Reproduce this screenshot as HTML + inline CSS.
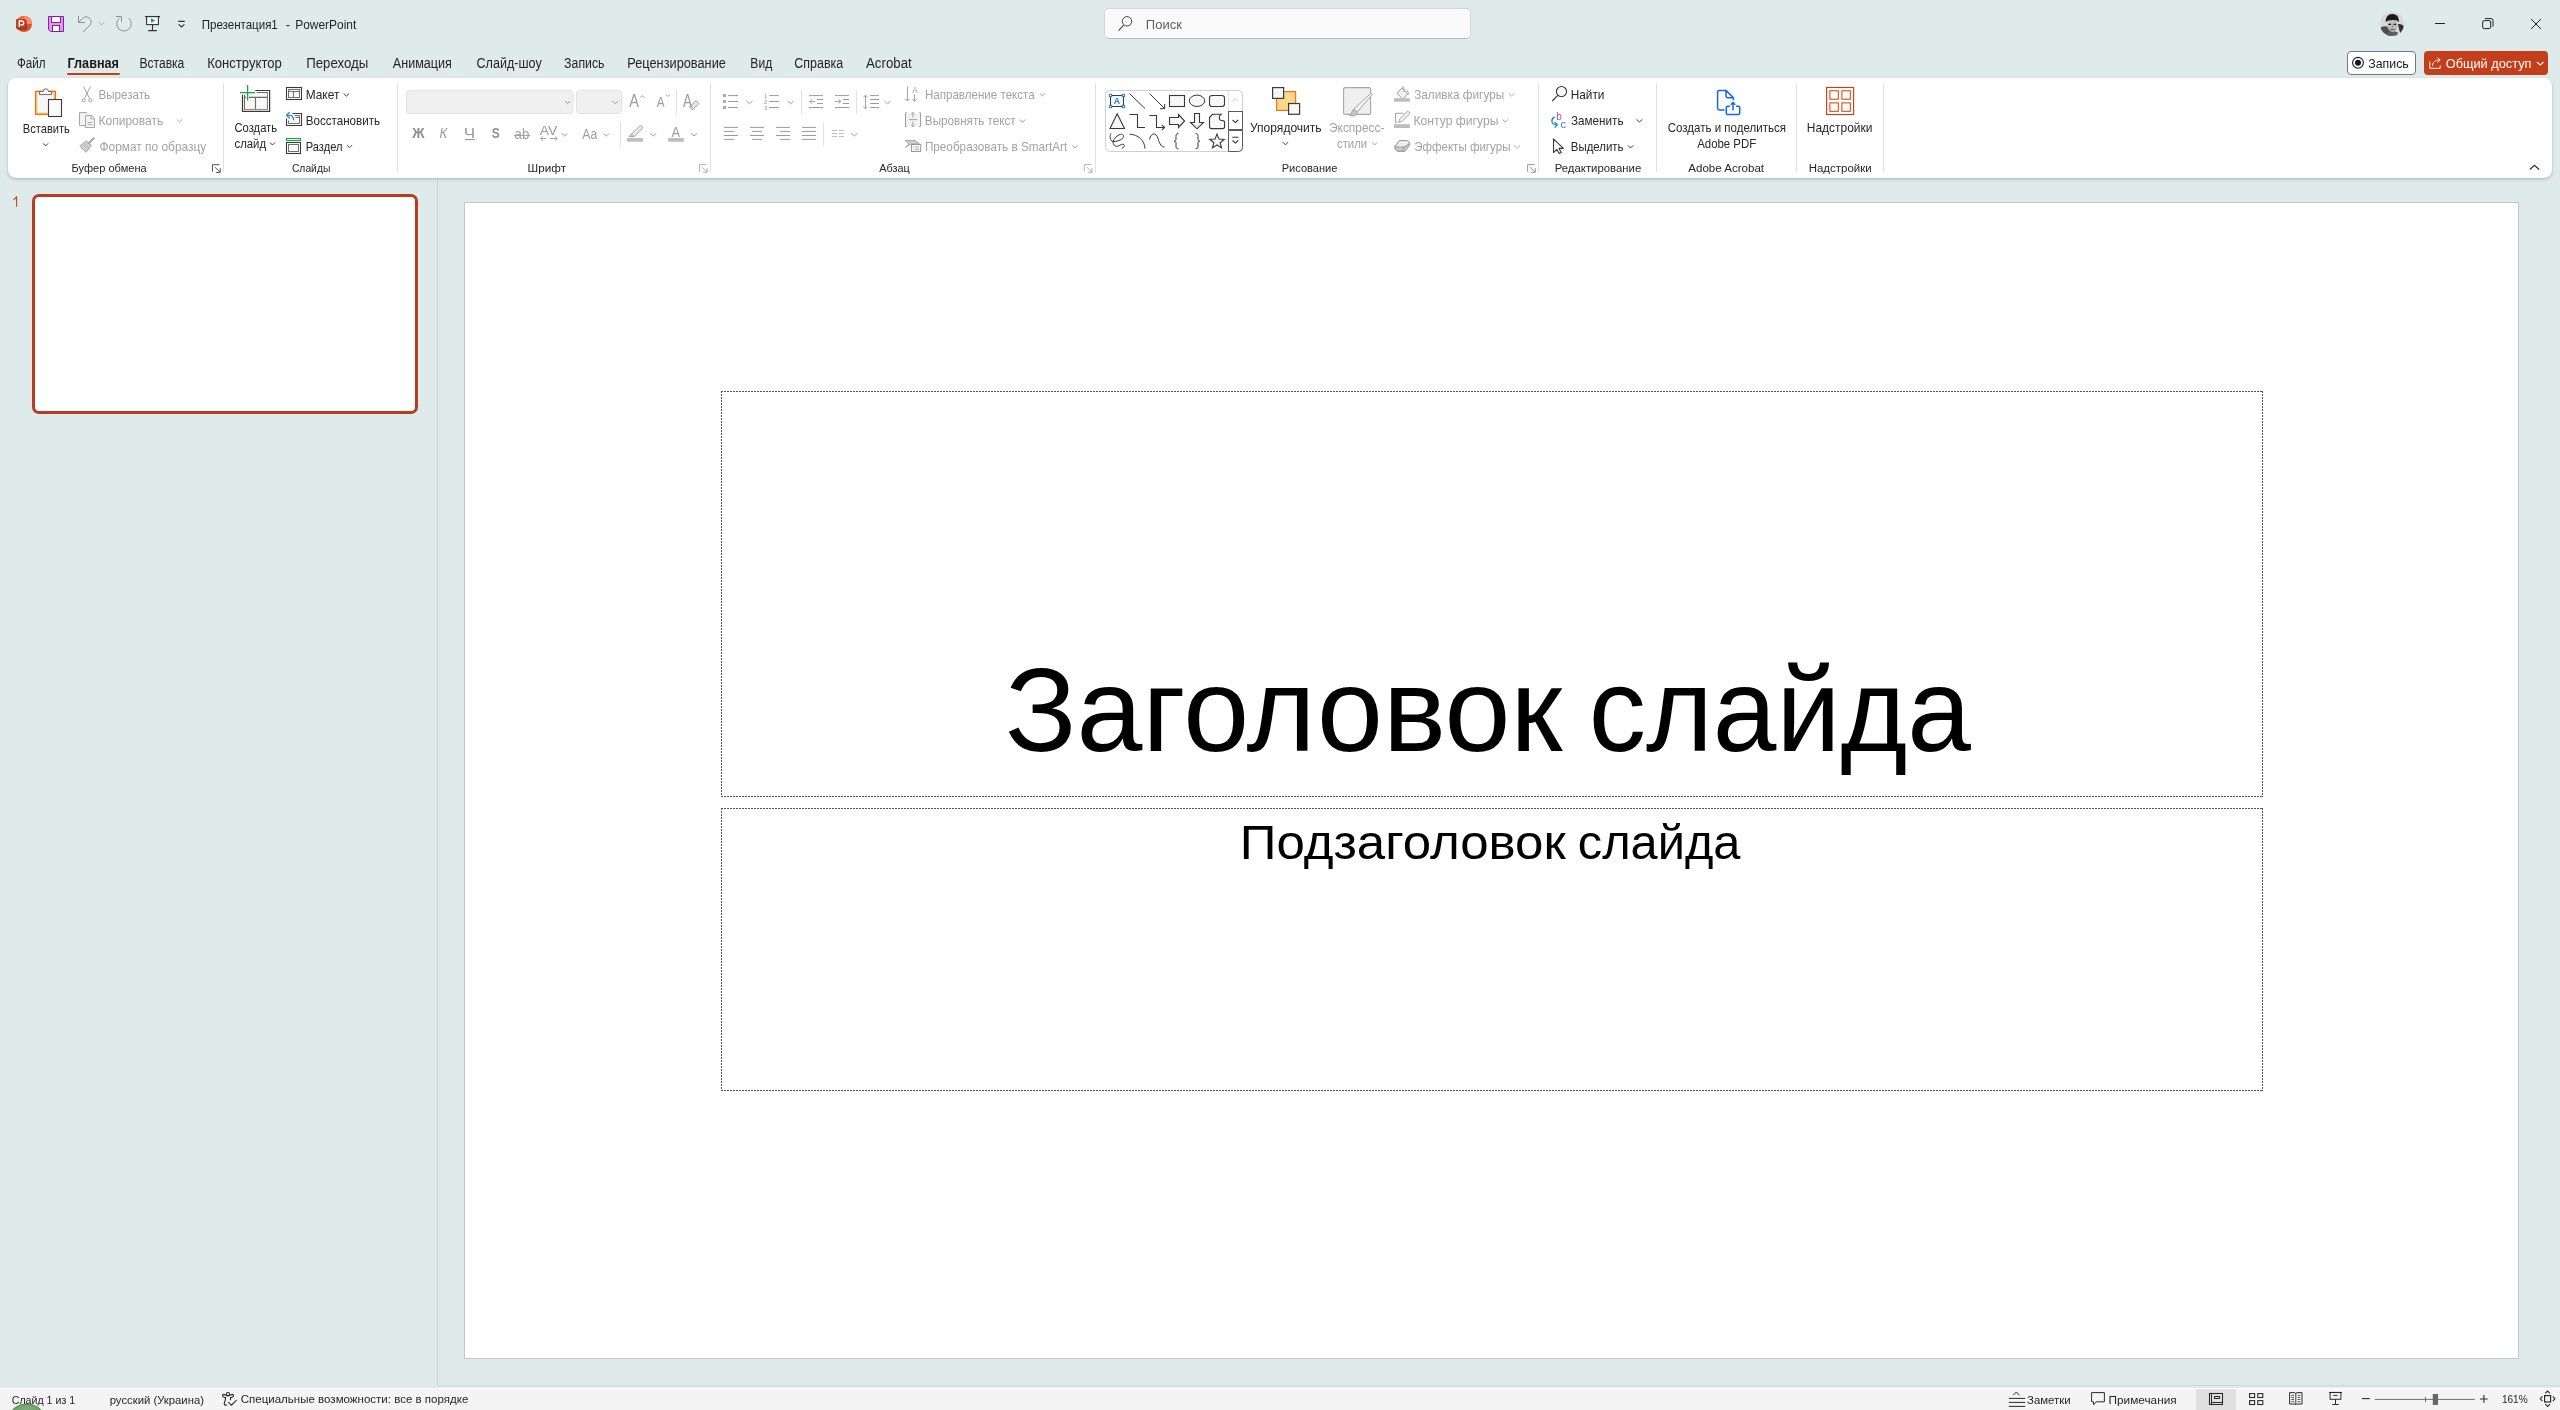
<!DOCTYPE html>
<html><head><meta charset="utf-8"><title>PowerPoint</title>
<style>
html,body{margin:0;padding:0;}
body{width:2560px;height:1410px;overflow:hidden;position:relative;background:#dfebea;font-family:"Liberation Sans",sans-serif;}
.abs{position:absolute;}
#ribbon{left:8px;top:78px;width:2544px;height:100px;background:#fff;border-radius:8px;box-shadow:0 1px 2px rgba(0,0,0,0.18),0 2px 5px rgba(0,0,0,0.08);}
#search{left:1104px;top:8px;width:365px;height:29px;background:#fafafa;border:1px solid #d6d6d6;border-bottom-color:#bdbdbd;border-radius:5px;}
#sep{left:437px;top:180px;width:1px;height:1206px;background:#d0d0d0;}
#slide{left:464px;top:202px;width:2053px;height:1155px;background:#fff;border:1px solid #c6c6c6;}
#bline{left:438px;top:1385px;width:2122px;height:1px;background:#d4d4d4;}
#status{left:0;top:1388px;width:2560px;height:22px;background:#f4f4f4;border-top:1px solid #ffffff;}
#thumb{left:32px;top:194px;width:380px;height:214px;background:#fff;border:3px solid #b83c1d;border-radius:7px;}
#share{left:2424px;top:51px;width:124px;height:24px;background:#c43e1c;border-radius:4px;}
#rec{left:2347px;top:51px;width:67px;height:22px;background:#fff;border:1px solid #767676;border-radius:4px;}
#tabul{left:67px;top:73px;width:53px;height:2px;background:#c43e1c;border-radius:1px;}
#normv{left:2196px;top:1389px;width:40px;height:21px;background:#e0e0e0;}
svg{position:absolute;left:0;top:0;will-change:transform;}
</style></head><body>
<div class="abs" id="ribbon"></div>
<div class="abs" id="search"></div>
<div class="abs" id="sep"></div>
<div class="abs" id="slide"></div>
<div class="abs" id="bline"></div>
<div class="abs" id="status"></div>
<div class="abs" id="normv"></div>
<div class="abs" id="thumb"></div>
<div class="abs" id="share"></div>
<div class="abs" id="rec"></div>
<div class="abs" id="tabul"></div>
<svg width="2560" height="1410" viewBox="0 0 2560 1410" font-family="'Liberation Sans', sans-serif">
<path d="M721,391.5 H2263 M721,796.5 H2263 M721.5,391 V797 M2262.5,391 V797" fill="none" stroke="#555" stroke-width="1" stroke-dasharray="2 1"/>
<path d="M721,808.5 H2263 M721,1090.5 H2263 M721.5,808 V1091 M2262.5,808 V1091" fill="none" stroke="#555" stroke-width="1" stroke-dasharray="2 1"/>
<circle cx="24" cy="24" r="8" fill="#d9522c"/>
<path d="M24,16 A8,8 0 0 1 32,24 L24,24 Z" fill="#ff8b66"/>
<path d="M24,16 A8,8 0 0 0 16.5,21 L24,24 Z" fill="#ed6c47"/>
<rect x="17" y="20" width="9.5" height="9.5" rx="1" fill="#6e2a19"/>
<rect x="16" y="19" width="9.8" height="9.8" rx="1" fill="#c43e1c"/>
<path d="M19.3,27 V21 H21.8 A1.9,1.9 0 0 1 21.8,24.8 H20.5" fill="none" stroke="#fff" stroke-width="1.4"/>
<path d="M48.5,16.5 H63.5 V31.5 H50.5 L48.5,29.5 Z" fill="#dc9ce5" stroke="#8f1c9f" stroke-width="1"/>
<rect x="51.5" y="16.5" width="9" height="6" fill="#fff" stroke="#8f1c9f" stroke-width="1"/>
<rect x="52.5" y="25.5" width="7" height="6" fill="#fff" stroke="#8f1c9f" stroke-width="1"/>
<path d="M78.5,16 V22.5 H85" fill="none" stroke="#8e8e8e" stroke-width="1"/>
<path d="M78.8,22.2 L82.8,18.2 A5,5 0 0 1 89.8,25.3 L83,32" fill="none" stroke="#8e8e8e" stroke-width="1"/>
<path d="M98.8,22.3 L101.5,24.8 L104.2,22.3" fill="none" stroke="#b3acac" stroke-width="1"/>
<path d="M128.9,18.3 A7.3,7.3 0 1 1 119.2,18.2" fill="none" stroke="#8e8e8e" stroke-width="1"/>
<path d="M116,16.5 H121.5 V22" fill="none" stroke="#8e8e8e" stroke-width="1"/>
<path d="M145,16.6 H160" stroke="#333333" stroke-width="1.3"/>
<rect x="146.6" y="16.6" width="11.8" height="8" fill="#fafafa" stroke="#333333" stroke-width="1.1"/>
<path d="M152.5,24.6 V30.5 M148.2,30.6 H156.9" stroke="#333333" stroke-width="1.1" fill="none"/>
<path d="M151,18.3 L155.2,20.5 L151,22.8 Z" fill="#1f9b45"/>
<path d="M178.2,21.4 H184.8 M178.6,24.3 L181.5,27 L184.4,24.3" fill="none" stroke="#333333" stroke-width="1.1"/>
<circle cx="1127" cy="21.3" r="4.7" fill="none" stroke="#444" stroke-width="1"/>
<path d="M1118.6,30.6 L1123.6,25.2" stroke="#444" stroke-width="1.1"/>
<clipPath id="av"><circle cx="2392" cy="24" r="12"/></clipPath>
<g clip-path="url(#av)"><rect x="2380" y="12" width="24" height="25" fill="#d9d9d9"/><path d="M2380,28 C2383.5,25.5 2387,25.8 2389.5,28.5 L2392.5,37 H2380 Z" fill="#4e4e4e"/><path d="M2398,24 C2401,23.5 2403.5,25 2404.5,27.5 L2400.5,34 L2399,29 Z" fill="#333333"/><path d="M2387,32.5 L2392.5,30.5 L2398,32.5 L2397,37 H2388 Z" fill="#5e5e5e"/><ellipse cx="2392.6" cy="25.8" rx="5.2" ry="6.1" fill="#bcbcbc"/><path d="M2385.8,22 C2385.3,16.5 2388.8,13.8 2392.5,14 C2396.5,14.1 2399.3,16.6 2398.9,22.5 C2397.6,20.3 2395.2,19.8 2392.6,20 C2390,20.1 2387.6,20.5 2385.8,22 Z" fill="#1b1b1b"/><path d="M2388.4,24.4 H2391 M2393.6,24.4 H2396.2" stroke="#222" stroke-width="1.1"/><path d="M2392.4,24.8 V28.2" stroke="#8c8c8c" stroke-width="0.9"/><path d="M2390.2,29.6 H2395" stroke="#555" stroke-width="1"/></g>
<path d="M2435,23.5 H2445" stroke="#1f1f1f" stroke-width="1"/>
<rect x="2482.7" y="20.6" width="8" height="8" rx="1.5" fill="none" stroke="#1f1f1f" stroke-width="1"/>
<path d="M2485,18.6 H2491 A2,2 0 0 1 2493,20.6 V26.6" fill="none" stroke="#1f1f1f" stroke-width="1"/>
<path d="M2531,19 L2541,29 M2541,19 L2531,29" stroke="#1f1f1f" stroke-width="1"/>
<circle cx="2358" cy="62.8" r="5.4" fill="none" stroke="#1a1a1a" stroke-width="1.1"/>
<circle cx="2358" cy="62.8" r="3" fill="#1a1a1a"/>
<path d="M2429.8,61.5 V68.3 H2440.2 V65.5" fill="none" stroke="#fff" stroke-width="1"/>
<path d="M2432.5,66 C2432.8,62 2435,60 2439.5,60" fill="none" stroke="#fff" stroke-width="1"/>
<path d="M2437.5,57.5 L2440.2,60 L2437.5,62.5" fill="none" stroke="#fff" stroke-width="1"/>
<path d="M2537,62 L2540.2,65 L2543.5,62" fill="none" stroke="#fff" stroke-width="1.1"/>
<path d="M2529.8,169.5 L2534.5,165.2 L2539.2,169.5" fill="none" stroke="#333333" stroke-width="1.2"/>
<path d="M223.5,83 V172" stroke="#e0e0e0" stroke-width="1"/>
<path d="M397.5,83 V172" stroke="#e0e0e0" stroke-width="1"/>
<path d="M710.5,83 V172" stroke="#e0e0e0" stroke-width="1"/>
<path d="M1095.5,83 V172" stroke="#e0e0e0" stroke-width="1"/>
<path d="M1538.5,83 V172" stroke="#e0e0e0" stroke-width="1"/>
<path d="M1656.5,83 V172" stroke="#e0e0e0" stroke-width="1"/>
<path d="M1796.5,83 V172" stroke="#e0e0e0" stroke-width="1"/>
<path d="M1883.5,83 V172" stroke="#e0e0e0" stroke-width="1"/>
<rect x="35.6" y="91.3" width="19.8" height="23" fill="#fbd98a" stroke="#e8730f" stroke-width="1.3"/>
<rect x="37.6" y="93.4" width="15.8" height="19" fill="#f7f7f7"/>
<path d="M39.6,94.6 V91.4 H43.2 A2.6,2.6 0 0 1 48.4,91.4 H51.6 V94.6 Z" fill="#fafafa" stroke="#6a6a6a" stroke-width="1"/>
<rect x="48.5" y="99.5" width="13" height="17" fill="#fafafa" stroke="#3b3b3b" stroke-width="1.1"/>
<path d="M43.0,143.3 L45.6,145.9 L48.2,143.3" fill="none" stroke="#3b3b3b" stroke-width="1.0"/>
<path d="M83.5,86.5 L89.6,98.6 M90.5,86.5 L84.4,98.6" fill="none" stroke="#a6a6a6" stroke-width="1"/>
<circle cx="83.8" cy="100.3" r="1.6" fill="none" stroke="#a6a6a6" stroke-width="1"/>
<circle cx="90.2" cy="100.3" r="1.6" fill="none" stroke="#a6a6a6" stroke-width="1"/>
<path d="M86.3,125.6 H79.5 V112.6 H86.5 L87.3,113.4" fill="#f4f4f4" stroke="#a6a6a6" stroke-width="1"/>
<path d="M85.5,115.5 H91.3 L94.5,118.7 V127.5 H85.5 Z" fill="#f4f4f4" stroke="#a6a6a6" stroke-width="1"/>
<path d="M91,115.5 V119 H94.5 M87.5,122.5 H92.5 M87.5,124.6 H92.5" fill="none" stroke="#a6a6a6" stroke-width="0.9"/>
<path d="M176.8,119.4 L179.5,122.0 L182.20000000000002,119.4" fill="none" stroke="#a6a6a6" stroke-width="1.0"/>
<path d="M79.8,146.2 L86.5,140.8 L91.4,145.5 L86,152.3 Z" fill="#d0d0d0" stroke="#a8a8a8" stroke-width="1"/>
<path d="M83.5,143.5 L89,149" stroke="#a8a8a8" stroke-width="0.8"/>
<path d="M88.8,143.2 L93.8,138.3" stroke="#a8a8a8" stroke-width="2.2" stroke-linecap="round"/>
<path d="M212.5,171.7 V164.7 H219.5" fill="none" stroke="#555555" stroke-width="1"/>
<path d="M215,167.2 L220,172.2 M220.2,168.2 V172.39999999999998 H216" fill="none" stroke="#555555" stroke-width="1"/>
<path d="M255.3,90.5 H269.6 V111.3 H242.5 V94.8" fill="none" stroke="#3a3a3a" stroke-width="1.2"/>
<path d="M257,92.6 H267.3 V109.2 H244.5 V94.8 M244.5,97.4 H246 M249,97.4 H267.3 M255.5,97.4 V109.2" fill="none" stroke="#6e6b66" stroke-width="1.1"/>
<rect x="245.2" y="98" width="10" height="10.8" fill="#f8f8f8"/><rect x="256" y="98" width="10.8" height="10.8" fill="#f8f8f8"/><rect x="245.2" y="93.2" width="21.6" height="3.8" fill="#f8f8f8"/>
<path d="M244.5,97.4 H246 M249,97.4 H267.3 M255.5,97.4 V109.2" fill="none" stroke="#6e6b66" stroke-width="1.1"/>
<path d="M240,92.6 H255.2 M247.6,85 V100.6" stroke="#21a04a" stroke-width="1.3"/>
<path d="M269.9,142.4 L272.5,145.0 L275.09999999999997,142.4" fill="none" stroke="#3b3b3b" stroke-width="1.0"/>
<rect x="286.5" y="87.5" width="15" height="12" fill="none" stroke="#3a3a3a" stroke-width="1.1"/>
<rect x="288.5" y="89.5" width="11" height="8" fill="#f8f8f8" stroke="#707070" stroke-width="1"/>
<path d="M288.5,91.5 H299.5 M293.5,91.5 V97.5" fill="none" stroke="#707070" stroke-width="1"/>
<path d="M343.7,93.5 L346.4,96.1 L349.09999999999997,93.5" fill="none" stroke="#3b3b3b" stroke-width="1.0"/>
<path d="M292.5,113.5 H301.5 V125.5 H286.5 V118.5" fill="none" stroke="#3a3a3a" stroke-width="1.1"/>
<path d="M294.5,115.5 H299.5 V123.5 H288.5 V120.5 M295.5,117.5 H299.5 M293.5,121.5 V123.5" fill="none" stroke="#707070" stroke-width="1"/>
<rect x="289" y="118" width="10" height="5" fill="#f8f8f8"/>
<path d="M287,115.3 H289.6 C292,115.3 293.6,117.3 293.6,120.2" fill="none" stroke="#2a8ad4" stroke-width="1.3"/>
<path d="M289.7,112.2 L286.5,115.3 L289.7,118.5" fill="none" stroke="#2a8ad4" stroke-width="1.3"/>
<path d="M346.9,145.1 L349.5,147.7 L352.09999999999997,145.1" fill="none" stroke="#3b3b3b" stroke-width="1.0"/>
<rect x="286.5" y="138.5" width="14" height="2" fill="#fff" stroke="#21a04a" stroke-width="1.1"/>
<rect x="286.5" y="142.5" width="14" height="11" fill="none" stroke="#3a3a3a" stroke-width="1.1"/>
<rect x="288.5" y="144.5" width="10" height="7" fill="#f8f8f8" stroke="#707070" stroke-width="1"/>
<rect x="406.5" y="90.5" width="166.5" height="23" rx="3" fill="#f0f0f0" stroke="#e2e2e2" stroke-width="1"/>
<path d="M564.8,101.0 L567.5,103.7 L570.1999999999999,101.0" fill="none" stroke="#a0a0a0" stroke-width="1.0"/>
<rect x="576.5" y="90.5" width="45" height="23" rx="3" fill="#f0f0f0" stroke="#e2e2e2" stroke-width="1"/>
<path d="M612.6,101.0 L615.4,103.7 L618.2,101.0" fill="none" stroke="#a0a0a0" stroke-width="1.0"/>
<path d="M640.3,97.6 L642.3,95.5 L644.3,97.6" fill="none" stroke="#9c9c9c" stroke-width="0.9"/>
<path d="M665.6,94.3 L667.8,96.5 L670,94.3" fill="none" stroke="#9c9c9c" stroke-width="0.9"/>
<path d="M676.5,90 V114" stroke="#e0e0e0" stroke-width="1"/>
<path d="M694,108.5 L700.5,102 L703.5,105 L697,111.5 Z" fill="#e6e6e6" stroke="#9c9c9c" stroke-width="1" transform="translate(-4.5,-1.5)"/>
<path d="M694.3,106.4 L697.5,109.6" stroke="#9c9c9c" stroke-width="0.8" transform="translate(-4.5,-1.5)"/>
<rect x="465" y="139" width="10" height="1.1" fill="#9c9c9c"/>
<path d="M513.8,135.4 H530.3" stroke="#9c9c9c" stroke-width="1"/>
<path d="M540.5,138.5 H546 M543,136.3 L540.6,138.5 L543,140.7 M549.5,138.5 H557.3 M554.8,136.3 L557.2,138.5 L554.8,140.7" fill="none" stroke="#9c9c9c" stroke-width="0.9"/>
<path d="M561.8,133.4 L564.5999999999999,136.0 L567.4,133.4" fill="none" stroke="#9c9c9c" stroke-width="1.0"/>
<path d="M603.5,133.4 L606.3,136.0 L609.1,133.4" fill="none" stroke="#9c9c9c" stroke-width="1.0"/>
<path d="M620.5,122 V146" stroke="#e0e0e0" stroke-width="1"/>
<path d="M630.5,136.4 L632,133.5 L639.5,126.3 C640.3,125.6 641.3,125.7 642,126.4 C642.7,127.1 642.8,128 642,128.8 L634.7,136 Z" fill="#ececec" stroke="#9c9c9c" stroke-width="0.9"/>
<path d="M632,133.5 L628.8,136.6 H634.6" fill="#c8c8c8" stroke="#9c9c9c" stroke-width="0.8"/>
<rect x="627.1" y="138" width="15.8" height="3.7" fill="#bdbdbd"/>
<path d="M650.4,133.4 L653.3,136.0 L656.1999999999999,133.4" fill="none" stroke="#9c9c9c" stroke-width="1.0"/>
<rect x="668.1" y="138" width="15.8" height="3.7" fill="#bdbdbd"/>
<path d="M691.0,133.4 L694.0,136.0 L697.0,133.4" fill="none" stroke="#9c9c9c" stroke-width="1.0"/>
<path d="M699.5,171.6 V164.6 H706.5" fill="none" stroke="#b3b3b3" stroke-width="1"/>
<path d="M702,167.1 L707,172.1 M707.2,168.1 V172.29999999999998 H703" fill="none" stroke="#b3b3b3" stroke-width="1"/>
<rect x="723" y="94.1" width="3" height="3" fill="#a8a8a8"/>
<path d="M728,95.6 H738" stroke="#9a9a9a" stroke-width="1"/>
<rect x="723" y="100.0" width="3" height="3" fill="#a8a8a8"/>
<path d="M728,101.5 H738" stroke="#9a9a9a" stroke-width="1"/>
<rect x="723" y="106.0" width="3" height="3" fill="#a8a8a8"/>
<path d="M728,107.5 H738" stroke="#9a9a9a" stroke-width="1"/>
<path d="M746.5,101.0 L749.5,103.8 L752.5,101.0" fill="none" stroke="#9a9a9a" stroke-width="1.0"/>
<path d="M769.2,95.6 H779" stroke="#9a9a9a" stroke-width="1"/>
<text x="764" y="98.3" font-size="6" fill="#9a9a9a">1</text>
<path d="M769.2,101.5 H779" stroke="#9a9a9a" stroke-width="1"/>
<text x="764" y="104.2" font-size="6" fill="#9a9a9a">2</text>
<path d="M769.2,107.5 H779" stroke="#9a9a9a" stroke-width="1"/>
<text x="764" y="110.2" font-size="6" fill="#9a9a9a">3</text>
<path d="M787.6,101.0 L790.6,103.8 L793.6,101.0" fill="none" stroke="#9a9a9a" stroke-width="1.0"/>
<path d="M801.5,90 V114" stroke="#e0e0e0" stroke-width="1"/>
<path d="M809,95.6 H823 M817,99.5 H823 M817,103.5 H823 M809,107.5 H823" stroke="#9a9a9a" stroke-width="1"/>
<path d="M815,101.5 H809.8 M812.2,99.1 L809.8,101.5 L812.2,103.9" fill="none" stroke="#9a9a9a" stroke-width="0.9"/>
<path d="M835,95.6 H849 M843,99.5 H849 M843,103.5 H849 M835,107.5 H849" stroke="#9a9a9a" stroke-width="1"/>
<path d="M835,101.5 H840.8 M838.4,99.1 L840.8,101.5 L838.4,103.9" fill="none" stroke="#9a9a9a" stroke-width="0.9"/>
<path d="M856.5,90 V114" stroke="#e0e0e0" stroke-width="1"/>
<path d="M865.5,95.2 V108.8 M863.2,97.5 L865.5,95.2 L867.8,97.5 M863.2,106.5 L865.5,108.8 L867.8,106.5" fill="none" stroke="#9a9a9a" stroke-width="0.9"/>
<path d="M870.2,95.6 H879 M870.2,99.5 H879 M870.2,103.5 H879 M870.2,107.5 H879" stroke="#9a9a9a" stroke-width="1"/>
<path d="M884.5,101.0 L887.5,103.8 L890.5,101.0" fill="none" stroke="#9a9a9a" stroke-width="1.0"/>
<path d="M724,127.4 H738" stroke="#9a9a9a" stroke-width="1"/>
<path d="M724,131.4 H734" stroke="#9a9a9a" stroke-width="1"/>
<path d="M724,135.5 H738" stroke="#9a9a9a" stroke-width="1"/>
<path d="M724,139.4 H734" stroke="#9a9a9a" stroke-width="1"/>
<path d="M750,127.4 H764" stroke="#9a9a9a" stroke-width="1"/>
<path d="M752,131.4 H762" stroke="#9a9a9a" stroke-width="1"/>
<path d="M750,135.5 H764" stroke="#9a9a9a" stroke-width="1"/>
<path d="M752,139.4 H762" stroke="#9a9a9a" stroke-width="1"/>
<path d="M776,127.4 H790" stroke="#9a9a9a" stroke-width="1"/>
<path d="M780,131.4 H790" stroke="#9a9a9a" stroke-width="1"/>
<path d="M776,135.5 H790" stroke="#9a9a9a" stroke-width="1"/>
<path d="M780,139.4 H790" stroke="#9a9a9a" stroke-width="1"/>
<path d="M802,127.4 H816" stroke="#9a9a9a" stroke-width="1"/>
<path d="M802,131.4 H816" stroke="#9a9a9a" stroke-width="1"/>
<path d="M802,135.5 H816" stroke="#9a9a9a" stroke-width="1"/>
<path d="M802,139.4 H816" stroke="#9a9a9a" stroke-width="1"/>
<path d="M823.6,122 V146" stroke="#e0e0e0" stroke-width="1"/>
<path d="M832,130.6 H837.2 M838.8,130.6 H844" stroke="#b5b5b5" stroke-width="0.9"/>
<path d="M832,133.6 H837.2 M838.8,133.6 H844" stroke="#b5b5b5" stroke-width="0.9"/>
<path d="M832,136.6 H837.2 M838.8,136.6 H844" stroke="#b5b5b5" stroke-width="0.9"/>
<path d="M851.4,133.2 L854.4,136.0 L857.4,133.2" fill="none" stroke="#9a9a9a" stroke-width="1.0"/>
<path d="M907.5,86.5 V101 M905.2,98.7 L907.5,101 L909.8,98.7 M914.5,94.2 V101.3 M912.2,99 L914.5,101.3 L916.8,99" fill="none" stroke="#9a9a9a" stroke-width="0.9"/>
<text x="912.3" y="92.5" font-size="8.2" fill="#9a9a9a">A</text>
<path d="M1039.8,93.3 L1042.45,95.89999999999999 L1045.1,93.3" fill="none" stroke="#9a9a9a" stroke-width="1.0"/>
<path d="M907,112.9 H905.5 V126.4 H907 M919,112.9 H920.6 V126.4 H919" fill="none" stroke="#9a9a9a" stroke-width="1"/>
<rect x="906" y="113.5" width="14" height="12.4" fill="#f2f2f2"/>
<path d="M908.8,119.6 H917.2 M912.9,112.4 V117.5 M911.2,114.2 L912.9,112.5 L914.6,114.2 M912.9,121.6 V126.8 M911.2,125 L912.9,126.7 L914.6,125" fill="none" stroke="#9a9a9a" stroke-width="0.9"/>
<path d="M1019.7,119.5 L1022.5500000000001,122.1 L1025.4,119.5" fill="none" stroke="#9a9a9a" stroke-width="1.0"/>
<path d="M905.3,140.5 H915.5 L919.5,144 H911 L905.3,147.5 L909,144 Z" fill="#cfcfcf" stroke="#9a9a9a" stroke-width="0.8"/>
<rect x="911.5" y="144.5" width="9.2" height="7" fill="#f7f7f7" stroke="#9a9a9a" stroke-width="1"/>
<path d="M913.3,147 H914 M915,147 H919 M913.3,149.3 H914 M915,149.3 H919" stroke="#9a9a9a" stroke-width="0.8"/>
<path d="M1072.2,145.4 L1074.8500000000001,148.0 L1077.5,145.4" fill="none" stroke="#9a9a9a" stroke-width="1.0"/>
<path d="M1084.3,171.6 V164.6 H1091.3" fill="none" stroke="#b3b3b3" stroke-width="1"/>
<path d="M1086.8,167.1 L1091.8,172.1 M1092.0,168.1 V172.29999999999998 H1087.8" fill="none" stroke="#b3b3b3" stroke-width="1"/>
<rect x="1105.5" y="90.5" width="137" height="61" rx="4" fill="#fff" stroke="#cfcfcf" stroke-width="1"/>
<path d="M1228.5,91 V111" stroke="#e3e3e3" stroke-width="1"/>
<path d="M1232.6,101.2 L1235.4,98.6 L1238.2,101.2" fill="none" stroke="#c8c8c8" stroke-width="1"/>
<rect x="1228.5" y="111.5" width="14" height="18" fill="#fff" stroke="#5a5a5a" stroke-width="1"/>
<path d="M1232.6,120 L1235.4,122.6 L1238.2,120" fill="none" stroke="#333" stroke-width="1.1"/>
<path d="M1228.5,130.5 H1242.5 V147.5 A4,4 0 0 1 1238.5,151.5 H1228.5 Z" fill="#fff" stroke="#5a5a5a" stroke-width="1"/>
<path d="M1232.4,137.3 H1238.4 M1232.6,140.5 L1235.4,143.1 L1238.2,140.5" fill="none" stroke="#333" stroke-width="1.1"/>
<rect x="1110.5" y="95.5" width="13" height="11" fill="#f4f8fc" stroke="#383838" stroke-width="1"/>
<rect x="1109.3" y="94.3" width="2.4" height="2.4" fill="#fff" stroke="#1479d4" stroke-width="0.9"/>
<rect x="1122.3" y="94.3" width="2.4" height="2.4" fill="#fff" stroke="#1479d4" stroke-width="0.9"/>
<rect x="1109.3" y="105.3" width="2.4" height="2.4" fill="#fff" stroke="#1479d4" stroke-width="0.9"/>
<rect x="1122.3" y="105.3" width="2.4" height="2.4" fill="#fff" stroke="#1479d4" stroke-width="0.9"/>
<text x="1113.7" y="103.9" font-size="8.8" font-weight="700" fill="#2a86d6">A</text>
<path d="M1129.6,93.6 L1145,108.5" stroke="#383838" stroke-width="1"/>
<path d="M1149.6,93.6 L1164.4,108.4 M1164.7,104 V108.7 H1160" fill="none" stroke="#383838" stroke-width="1"/>
<rect x="1169.5" y="95.5" width="15" height="11" fill="#f7f7f7" stroke="#383838" stroke-width="1.1"/>
<ellipse cx="1197" cy="100.8" rx="7.7" ry="5.7" fill="#f7f7f7" stroke="#383838" stroke-width="1"/>
<rect x="1209.5" y="95.5" width="15" height="11" rx="2.6" fill="#f7f7f7" stroke="#383838" stroke-width="1.1"/>
<path d="M1110,128.5 H1124.5 L1117.2,113.8 Z" fill="#f7f7f7" stroke="#383838" stroke-width="1.1" stroke-linejoin="miter"/>
<path d="M1129.5,114.5 H1137.5 V127.5 H1145" fill="none" stroke="#383838" stroke-width="1.1"/>
<path d="M1149.5,115.5 H1156.5 V127.5 H1164.5 M1161.8,124.8 L1164.6,127.5 L1161.8,130.2" fill="none" stroke="#383838" stroke-width="1.1"/>
<path d="M1169.5,117.5 H1178.5 V114.5 L1184.6,121 L1178.5,127.5 V124.5 H1169.5 Z" fill="#f7f7f7" stroke="#383838" stroke-width="1.1"/>
<path d="M1194.5,113.5 H1199.5 V122.5 H1203.5 L1197,128.8 L1190.5,122.5 H1194.5 Z" fill="#f7f7f7" stroke="#383838" stroke-width="1.1"/>
<path d="M1212.5,114.3 H1221 C1218.5,116 1218.8,120.5 1221.6,120.5 H1222.4 C1223.8,120.5 1224.6,121.3 1224.6,122.6 V126.5 C1224.6,127.8 1223.8,128.6 1222.5,128.6 H1211.5 C1210.2,128.6 1209.5,127.8 1209.5,126.5 V117.5 Z" fill="#f7f7f7" stroke="#383838" stroke-width="1.1"/>
<path d="M1111,133.4 C1109.4,136.2 1109.9,139.6 1112.8,141.6 C1114.2,138.8 1117,135 1120.6,134.3 C1123.2,133.9 1124.3,136 1123.1,137.7 C1121.5,140.1 1117,141.6 1112.8,141.6 C1113.3,144.5 1114.6,146.4 1116.9,146.3 C1119.1,146.2 1121,144 1123,144.2 C1125.1,144.6 1124.8,147.1 1121.7,148.6" fill="none" stroke="#383838" stroke-width="1"/>
<path d="M1129.6,134.2 C1138,134.6 1144.5,140 1145,148.6" fill="none" stroke="#383838" stroke-width="1"/>
<path d="M1149.6,139.5 C1150.8,132.5 1156,132 1158,138.5 C1160,145 1161.5,147 1164.6,147" fill="none" stroke="#383838" stroke-width="1"/>
<path d="M1178.5,133.5 C1176.3,133.5 1176,134.5 1176,136.5 V139.5 C1176,140.6 1175.2,141 1174.2,141.2 C1175.2,141.4 1176,141.8 1176,143 V146 C1176,148 1176.3,148.8 1178.5,148.8" fill="none" stroke="#383838" stroke-width="1"/>
<path d="M1195.5,133.5 C1197.7,133.5 1198,134.5 1198,136.5 V139.5 C1198,140.6 1198.8,141 1199.8,141.2 C1198.8,141.4 1198,141.8 1198,143 V146 C1198,148 1197.7,148.8 1195.5,148.8" fill="none" stroke="#383838" stroke-width="1"/>
<polygon points="1217.00,134.10 1218.94,139.03 1224.23,139.35 1220.14,142.72 1221.47,147.85 1217.00,145.00 1212.53,147.85 1213.86,142.72 1209.77,139.35 1215.06,139.03" fill="#f7f7f7" stroke="#383838" stroke-width="1.1"/>
<rect x="1276.6" y="91.6" width="19" height="18.8" fill="#f8d98c" stroke="#e9790f" stroke-width="1.2"/>
<rect x="1272.6" y="87.6" width="11" height="10.8" fill="#f7f7f7" stroke="#3b3b3b" stroke-width="1.2"/>
<rect x="1288.6" y="103.5" width="11" height="10.8" fill="#f7f7f7" stroke="#3b3b3b" stroke-width="1.2"/>
<path d="M1282.7,142.1 L1285.4,144.79999999999998 L1288.1000000000001,142.1" fill="none" stroke="#3b3b3b" stroke-width="1.0"/>
<rect x="1343.6" y="87.6" width="27" height="26.8" rx="1.5" fill="#efefef" stroke="#a8a8a8" stroke-width="1.1"/>
<path d="M1354,108.8 L1370.6,93.6 C1371.6,92.8 1372.8,93.8 1372,94.8 L1357.5,111.8" fill="#f2f2f2" stroke="#a8a8a8" stroke-width="1"/>
<path d="M1357.6,111.8 C1357,115.5 1353.5,117.3 1349.5,115.2 C1352.5,114.2 1351.5,110.3 1354,108.8 Z" fill="#c4c4c4" stroke="#a8a8a8" stroke-width="1"/>
<path d="M1372.0,142.4 L1374.6,145.0 L1377.2,142.4" fill="none" stroke="#a6a6a6" stroke-width="1.0"/>
<path d="M1396.8,93.2 L1402,88 L1407.8,93.8 L1402.6,99 Z" fill="#f0f0f0" stroke="#9e9e9e" stroke-width="1"/>
<path d="M1402,88 C1402,86 1404,86 1404,88 V92" fill="none" stroke="#9e9e9e" stroke-width="0.9"/>
<path d="M1406.5,89.5 C1408,91 1408.6,93 1408.2,95" fill="none" stroke="#9e9e9e" stroke-width="0.9"/>
<rect x="1394" y="98.2" width="15.9" height="3.5" fill="#bdbdbd"/>
<path d="M1508.8,93.4 L1511.55,96.0 L1514.3,93.4" fill="none" stroke="#a6a6a6" stroke-width="1.0"/>
<path d="M1403.5,113.3 H1395.5 V122.3 H1397" fill="none" stroke="#9e9e9e" stroke-width="1"/>
<path d="M1398.8,122.5 L1399.6,119 L1406.8,112 C1407.6,111.3 1408.6,111.3 1409.2,112 C1409.9,112.7 1409.9,113.6 1409.2,114.3 L1402,121.5 Z" fill="#f0f0f0" stroke="#9e9e9e" stroke-width="0.9"/>
<rect x="1394" y="124.2" width="15.9" height="3.8" fill="#bdbdbd"/>
<path d="M1502.4,119.4 L1505.2,122.0 L1508.0,119.4" fill="none" stroke="#a6a6a6" stroke-width="1.0"/>
<path d="M1394.6,146.8 L1399.6,140.6 H1406.8 C1408,140.6 1409.8,142.5 1409.8,144.5 L1405,151.4 H1398 C1396.5,151.4 1394.6,149 1394.6,146.8 Z" fill="#c8c8c8" stroke="#999999" stroke-width="1"/>
<path d="M1394.8,146.8 L1399.6,140.6 H1406.8 C1408,140.6 1409.5,142.3 1409.2,144 L1404,147 H1396 Z" fill="#efefef" stroke="#999999" stroke-width="1"/>
<path d="M1404,147 L1402.6,151.2" stroke="#999999" stroke-width="1"/>
<path d="M1514.6,145.4 L1517.3999999999999,148.0 L1520.1999999999998,145.4" fill="none" stroke="#a6a6a6" stroke-width="1.0"/>
<path d="M1527.6,171.6 V164.6 H1534.6" fill="none" stroke="#999999" stroke-width="1"/>
<path d="M1530.1,167.1 L1535.1,172.1 M1535.3,168.1 V172.29999999999998 H1531.1" fill="none" stroke="#999999" stroke-width="1"/>
<circle cx="1561.5" cy="91.6" r="5.1" fill="#fafafa" stroke="#3b3b3b" stroke-width="1.1"/>
<path d="M1552.2,101 L1557.8,95.4" stroke="#3b3b3b" stroke-width="1.2"/>
<text transform="translate(1556.2 119.6) scale(0.95 1)" font-size="10.6" fill="#b54ac4">b</text>
<text transform="translate(1560.6 128.1) scale(0.95 1)" font-size="11.6" fill="#1f87d2">c</text>
<path d="M1554.6,116.8 C1550.8,118.8 1550.6,124.6 1556.6,124.8" fill="none" stroke="#1f87d2" stroke-width="1.3"/>
<path d="M1554.6,122 L1557.3,124.8 L1554.6,127.6" fill="none" stroke="#1f87d2" stroke-width="1.3"/>
<path d="M1636.5,119.4 L1639.4,122.0 L1642.3,119.4" fill="none" stroke="#3b3b3b" stroke-width="1.0"/>
<path d="M1553.5,138.8 V152.6 L1556.8,149.4 L1559.2,153.6 L1561.3,152.6 L1559,148.4 H1563.4 Z" fill="#fafafa" stroke="#3b3b3b" stroke-width="1.1" stroke-linejoin="round"/>
<path d="M1628.0,145.4 L1630.6,148.0 L1633.2,145.4" fill="none" stroke="#3b3b3b" stroke-width="1.0"/>
<path d="M1724.5,110 H1719.3 C1718.3,110 1717.6,109.3 1717.6,108.3 V92.3 C1717.6,91.3 1718.3,90.6 1719.3,90.6 H1726.2 L1733.4,97.8 V100.3" fill="none" stroke="#1167e8" stroke-width="1.5" stroke-linejoin="round"/>
<path d="M1726,90.8 V96 C1726,97 1726.6,97.7 1727.6,97.7 H1733.3" fill="none" stroke="#1167e8" stroke-width="1.5"/>
<path d="M1730,106.2 H1727.5 C1726.8,106.2 1726.3,106.7 1726.3,107.4 V113.2 C1726.3,113.9 1726.8,114.4 1727.5,114.4 H1738.5 C1739.2,114.4 1739.7,113.9 1739.7,113.2 V107.4 C1739.7,106.7 1739.2,106.2 1738.5,106.2 H1736" fill="none" stroke="#1167e8" stroke-width="1.5"/>
<path d="M1733,110.2 V102.6 M1730.7,104.8 L1733,102.5 L1735.3,104.8" fill="none" stroke="#1167e8" stroke-width="1.5"/>
<rect x="1826.6" y="87.5" width="27" height="27" fill="none" stroke="#d83b01" stroke-width="1.1"/>
<rect x="1829.9" y="90.8" width="8.4" height="8.4" fill="none" stroke="#d83b01" stroke-width="1"/>
<rect x="1829.9" y="102.9" width="8.4" height="8.4" fill="none" stroke="#d83b01" stroke-width="1"/>
<rect x="1841.9" y="90.8" width="8.4" height="8.4" fill="none" stroke="#d83b01" stroke-width="1"/>
<rect x="1841.9" y="102.9" width="8.4" height="8.4" fill="none" stroke="#d83b01" stroke-width="1"/>
<circle cx="228" cy="1394.1" r="1.6" fill="none" stroke="#2b2b2b" stroke-width="1.1"/>
<path d="M226.8,1405.1 H225.6 C224.2,1405 223.9,1403.8 224.6,1402.2 C225.3,1400.6 225.6,1399.2 225.6,1397.6 C223.5,1397.2 222.3,1396.5 222.5,1395.3 C222.7,1394 224.2,1394.2 225.5,1394.9 C226.6,1395.5 227.3,1395.9 228,1395.9 C228.7,1395.9 229.4,1395.5 230.5,1394.9 C231.8,1394.2 233.3,1394 233.5,1395.3 C233.7,1396.5 232.5,1397.2 230.5,1397.6 V1400.3" fill="none" stroke="#2b2b2b" stroke-width="1.1"/>
<path d="M228.3,1402.2 L231.4,1405.2 L236.6,1400.2" fill="none" stroke="#2b2b2b" stroke-width="1.1"/>
<path d="M2013.3,1395.2 L2016.4,1392 L2019.5,1395.2" fill="none" stroke="#2b2b2b" stroke-width="1"/>
<path d="M2008.8,1398.4 H2025.2 M2008.8,1402.4 H2025.2 M2008.8,1406.4 H2025.2" stroke="#2b2b2b" stroke-width="1"/>
<path d="M2091.6,1392.6 H2104.4 V1401.8 H2096.3 L2093.6,1404.8 V1401.8 H2091.6 Z" fill="none" stroke="#2b2b2b" stroke-width="1" stroke-linejoin="round"/>
<rect x="2209.5" y="1393.5" width="13" height="11" fill="none" stroke="#2b2b2b" stroke-width="1.1"/>
<path d="M2211.5,1393.5 V1404.5 M2211.5,1402.5 H2222.5" fill="none" stroke="#2b2b2b" stroke-width="1"/>
<rect x="2214.5" y="1396.5" width="5" height="2" fill="none" stroke="#2b2b2b" stroke-width="1"/>
<rect x="2249.6" y="1393.6" width="5" height="3.9" fill="none" stroke="#2b2b2b" stroke-width="1.1"/>
<rect x="2249.6" y="1400.6" width="5" height="3.9" fill="none" stroke="#2b2b2b" stroke-width="1.1"/>
<rect x="2257.8" y="1393.6" width="5" height="3.9" fill="none" stroke="#2b2b2b" stroke-width="1.1"/>
<rect x="2257.8" y="1400.6" width="5" height="3.9" fill="none" stroke="#2b2b2b" stroke-width="1.1"/>
<path d="M2289.6,1392.6 H2294.5 C2295.2,1392.6 2295.8,1393.2 2295.8,1393.8 C2295.8,1393.2 2296.4,1392.6 2297.1,1392.6 H2302 V1404 H2296.6 L2295.8,1404.8 L2295,1404 H2289.6 Z" fill="none" stroke="#2b2b2b" stroke-width="1"/>
<path d="M2295.8,1394 V1404.2" stroke="#2b2b2b" stroke-width="0.9"/>
<path d="M2291.3,1395.3 H2294 M2297.6,1395.3 H2300.3" stroke="#2b2b2b" stroke-width="0.8"/>
<path d="M2291.3,1397.4 H2294 M2297.6,1397.4 H2300.3" stroke="#2b2b2b" stroke-width="0.8"/>
<path d="M2291.3,1399.5 H2294 M2297.6,1399.5 H2300.3" stroke="#2b2b2b" stroke-width="0.8"/>
<path d="M2291.3,1401.6 H2294 M2297.6,1401.6 H2300.3" stroke="#2b2b2b" stroke-width="0.8"/>
<path d="M2329,1392.5 H2342" stroke="#2b2b2b" stroke-width="1.1"/>
<rect x="2330.1" y="1392.5" width="10.8" height="6.8" fill="none" stroke="#2b2b2b" stroke-width="1"/>
<path d="M2333.3,1395.4 H2337.6 M2335.5,1399.3 V1404.4 M2332.3,1404.5 H2338.7" fill="none" stroke="#2b2b2b" stroke-width="1"/>
<path d="M2362,1398.6 H2369.8" stroke="#2b2b2b" stroke-width="1.1"/>
<path d="M2375,1399.4 H2474.8" stroke="#707070" stroke-width="1"/>
<path d="M2425.5,1396.9 V1402" stroke="#707070" stroke-width="1"/>
<rect x="2432.8" y="1394" width="5.2" height="10.9" fill="#666"/>
<path d="M2480,1399 H2487.7 M2483.9,1395 V1402.8" stroke="#2b2b2b" stroke-width="1.1"/>
<rect x="2544.6" y="1395.6" width="6" height="6.4" fill="none" stroke="#2b2b2b" stroke-width="1.2"/>
<path d="M2545.2,1393.3 L2547.6,1391.1 L2550,1393.3 M2545.2,1404.2 L2547.6,1406.4 L2550,1404.2 M2542.4,1396.4 L2540.3,1398.8 L2542.4,1401.2 M2552.8,1396.4 L2554.9,1398.8 L2552.8,1401.2" fill="none" stroke="#2b2b2b" stroke-width="1.1"/>
<defs><radialGradient id="gc" cx="0.5" cy="0.3" r="0.7"><stop offset="0" stop-color="#8fb98a"/><stop offset="1" stop-color="#4e8a48"/></radialGradient></defs>
<circle cx="26.7" cy="1424" r="20" fill="url(#gc)" stroke="#3d8a2f" stroke-width="1"/>
<path d="M13.4,199.6 C14.8,199 15.9,198 16.6,196.4 V206.8" fill="none" stroke="#cc4624" stroke-width="1.15"/>
<text transform="translate(201.73 29.20) scale(0.8717 1)" font-size="13.25" fill="#1f1f1f">Презентация1</text>
<text transform="translate(285.70 29.20) scale(1.0000 1)" font-size="13.25" fill="#1f1f1f">-</text>
<text transform="translate(295.20 29.20) scale(0.9035 1)" font-size="13.25" fill="#1f1f1f">PowerPoint</text>
<text transform="translate(1145.86 28.80) scale(1.0419 1)" font-size="12.5" fill="#5f5f5f">Поиск</text>
<text transform="translate(17.00 67.80) scale(0.8466 1)" font-size="13.75" fill="#262626">Файл</text>
<text transform="translate(67.50 67.80) scale(0.9213 1)" font-size="13.75" fill="#1a1a1a" font-weight="700">Главная</text>
<text transform="translate(139.42 67.80) scale(0.8799 1)" font-size="13.75" fill="#262626">Вставка</text>
<text transform="translate(207.15 67.80) scale(0.9530 1)" font-size="13.75" fill="#262626">Конструктор</text>
<text transform="translate(306.14 67.80) scale(0.9647 1)" font-size="13.75" fill="#262626">Переходы</text>
<text transform="translate(392.80 67.80) scale(0.9157 1)" font-size="13.75" fill="#262626">Анимация</text>
<text transform="translate(476.50 67.80) scale(0.9159 1)" font-size="13.75" fill="#262626">Слайд-шоу</text>
<text transform="translate(564.10 67.80) scale(0.8965 1)" font-size="13.75" fill="#262626">Запись</text>
<text transform="translate(627.27 67.80) scale(0.9296 1)" font-size="13.75" fill="#262626">Рецензирование</text>
<text transform="translate(750.32 67.80) scale(0.8804 1)" font-size="13.75" fill="#262626">Вид</text>
<text transform="translate(794.30 67.80) scale(0.9062 1)" font-size="13.75" fill="#262626">Справка</text>
<text transform="translate(866.00 67.80) scale(0.9650 1)" font-size="13.75" fill="#262626">Acrobat</text>
<text transform="translate(2368.20 67.60) scale(0.9900 1)" font-size="12.5" fill="#1a1a1a">Запись</text>
<text transform="translate(2445.70 67.60) scale(1.0226 1)" font-size="12.5" fill="#ffffff">Общий доступ</text>
<text transform="translate(22.80 132.60) scale(0.9266 1)" font-size="12.0" fill="#262626">Вставить</text>
<text transform="translate(98.55 98.80) scale(0.9472 1)" font-size="12.25" fill="#a3a3a3">Вырезать</text>
<text transform="translate(98.56 124.80) scale(0.9411 1)" font-size="12.75" fill="#a3a3a3">Копировать</text>
<text transform="translate(99.50 150.90) scale(0.9352 1)" font-size="12.75" fill="#a3a3a3">Формат по образцу</text>
<text transform="translate(71.60 171.80) scale(1.0063 1)" font-size="11.0" fill="#262626">Буфер обмена</text>
<text transform="translate(234.50 132.00) scale(0.8980 1)" font-size="12.5" fill="#262626">Создать</text>
<text transform="translate(234.50 147.90) scale(0.9284 1)" font-size="12.25" fill="#262626">слайд</text>
<text transform="translate(305.64 98.80) scale(0.9552 1)" font-size="12.5" fill="#262626">Макет</text>
<text transform="translate(305.69 124.90) scale(0.9123 1)" font-size="12.75" fill="#262626">Восстановить</text>
<text transform="translate(305.73 150.90) scale(0.8722 1)" font-size="12.75" fill="#262626">Раздел</text>
<text transform="translate(291.90 171.80) scale(0.9405 1)" font-size="11.0" fill="#262626">Слайды</text>
<text transform="translate(527.60 171.80) scale(1.0622 1)" font-size="11.0" fill="#262626">Шрифт</text>
<text transform="translate(924.89 99.00) scale(0.9100 1)" font-size="12.75" fill="#a3a3a3">Направление текста</text>
<text transform="translate(924.87 125.10) scale(0.9333 1)" font-size="12.5" fill="#a3a3a3">Выровнять текст</text>
<text transform="translate(924.88 151.00) scale(0.9208 1)" font-size="12.75" fill="#a3a3a3">Преобразовать в SmartArt</text>
<text transform="translate(879.30 171.80) scale(0.9919 1)" font-size="11.0" fill="#262626">Абзац</text>
<text transform="translate(1250.00 131.80) scale(0.9445 1)" font-size="12.75" fill="#262626">Упорядочить</text>
<text transform="translate(1329.00 131.80) scale(0.9341 1)" font-size="12.75" fill="#a3a3a3">Экспресс-</text>
<text transform="translate(1337.00 147.80) scale(0.9082 1)" font-size="12.5" fill="#a3a3a3">стили</text>
<text transform="translate(1414.20 98.80) scale(0.9259 1)" font-size="12.75" fill="#a3a3a3">Заливка фигуры</text>
<text transform="translate(1413.55 124.80) scale(0.9524 1)" font-size="12.75" fill="#a3a3a3">Контур фигуры</text>
<text transform="translate(1414.20 150.90) scale(0.9068 1)" font-size="12.75" fill="#a3a3a3">Эффекты фигуры</text>
<text transform="translate(1281.70 171.80) scale(1.0058 1)" font-size="11.0" fill="#262626">Рисование</text>
<text transform="translate(1570.77 98.80) scale(0.9274 1)" font-size="12.75" fill="#262626">Найти</text>
<text transform="translate(1571.00 124.80) scale(0.9176 1)" font-size="12.75" fill="#262626">Заменить</text>
<text transform="translate(1570.80 150.90) scale(0.8973 1)" font-size="12.75" fill="#262626">Выделить</text>
<text transform="translate(1554.70 171.80) scale(1.0337 1)" font-size="11.0" fill="#262626">Редактирование</text>
<text transform="translate(1667.70 131.70) scale(0.9226 1)" font-size="12.5" fill="#262626">Создать и поделиться</text>
<text transform="translate(1697.20 147.60) scale(0.9325 1)" font-size="12.25" fill="#262626">Adobe PDF</text>
<text transform="translate(1688.30 171.80) scale(1.0507 1)" font-size="11.0" fill="#262626">Adobe Acrobat</text>
<text transform="translate(1806.84 131.70) scale(0.9571 1)" font-size="12.5" fill="#262626">Надстройки</text>
<text transform="translate(1808.70 171.80) scale(1.0447 1)" font-size="11.0" fill="#262626">Надстройки</text>
<text transform="translate(1004.99 750.70) scale(1.0049 1)" font-size="118.0" fill="#000000">Заголовок</text>
<text transform="translate(1588.85 750.70) scale(0.9701 1)" font-size="118.0" fill="#000000">слайда</text>
<text transform="translate(1239.81 858.90) scale(1.0625 1)" font-size="48.0" fill="#000000">Подзаголовок</text>
<text transform="translate(1577.77 858.90) scale(1.0156 1)" font-size="48.0" fill="#000000">слайда</text>
<text transform="translate(11.70 1403.60) scale(0.9466 1)" font-size="11.25" fill="#262626">Слайд 1 из 1</text>
<text transform="translate(109.70 1403.60) scale(1.0067 1)" font-size="11.25" fill="#262626">русский (Украина)</text>
<text transform="translate(240.70 1403.30) scale(1.0260 1)" font-size="11.25" fill="#262626">Специальные возможности: все в порядке</text>
<text transform="translate(2027.00 1403.50) scale(1.0154 1)" font-size="11.25" fill="#262626">Заметки</text>
<text transform="translate(2108.60 1403.50) scale(1.0484 1)" font-size="11.25" fill="#262626">Примечания</text>
<text transform="translate(2501.90 1402.90) scale(0.8968 1)" font-size="11.25" fill="#262626">161%</text>
<text transform="translate(412.17 137.70) scale(0.9714 1)" font-size="14.0" fill="#8f8f8f" font-weight="700">Ж</text>
<text transform="translate(439.60 137.70) scale(0.9333 1)" font-size="14.0" fill="#9c9c9c" font-style="italic">К</text>
<text transform="translate(463.77 137.70) scale(1.2250 1)" font-size="14.0" fill="#9c9c9c">Ч</text>
<text transform="translate(491.80 137.70) scale(0.8556 1)" font-size="14.0" fill="#8f8f8f" font-weight="700">S</text>
<text transform="translate(514.50 139.00) scale(0.9502 1)" font-size="14.0" fill="#a0a0a0">ab</text>
<text transform="translate(539.80 134.50) scale(1.1712 1)" font-size="12.0" fill="#9c9c9c">AV</text>
<text transform="translate(582.30 138.90) scale(0.8409 1)" font-size="14.5" fill="#9c9c9c">Aa</text>
<text transform="translate(629.20 106.80) scale(0.8000 1)" font-size="18.25" fill="#9c9c9c">A</text>
<text transform="translate(656.70 106.80) scale(0.8300 1)" font-size="14.25" fill="#9c9c9c">A</text>
<text transform="translate(683.00 106.60) scale(0.7308 1)" font-size="18.5" fill="#9c9c9c">A</text>
<text transform="translate(671.50 136.80) scale(0.8273 1)" font-size="15.5" fill="#9c9c9c">A</text>
</svg>
</body></html>
